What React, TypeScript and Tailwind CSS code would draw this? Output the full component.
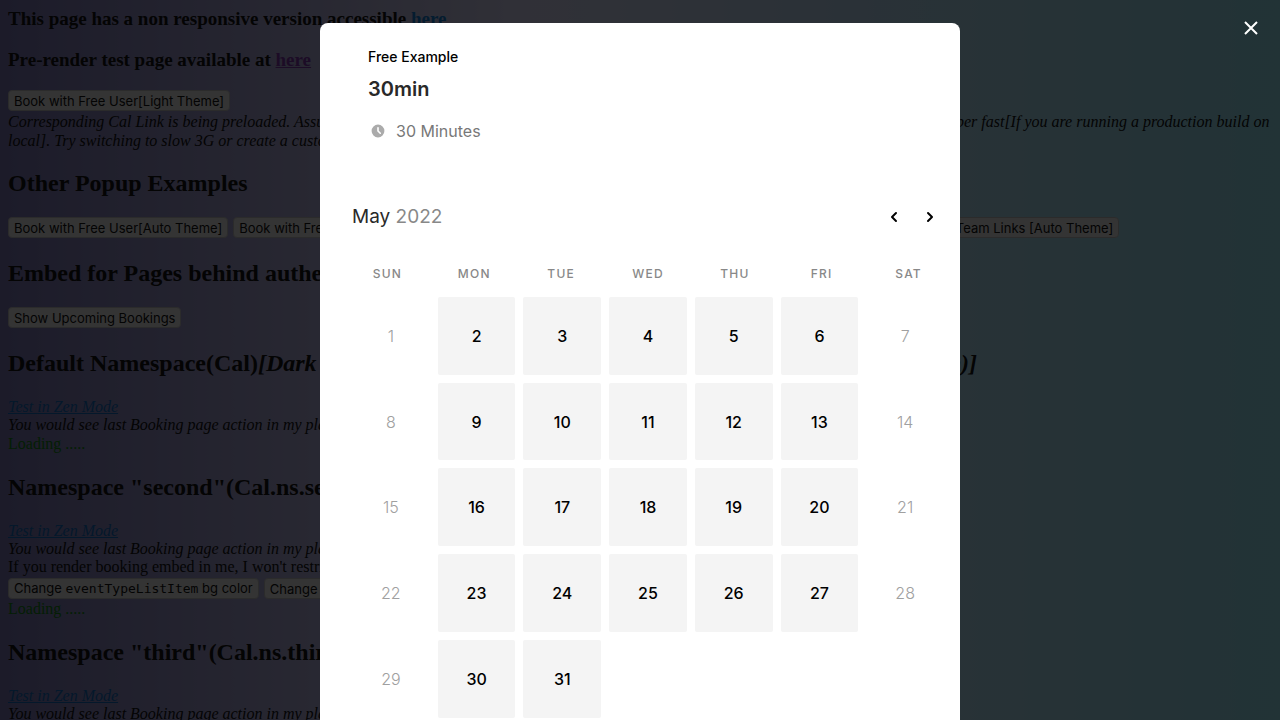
import type { ReactNode } from "react";
import { HiChevronLeft, HiChevronRight, HiClock } from "react-icons/hi";

const WEEKDAYS = ["Sun", "Mon", "Tue", "Wed", "Thu", "Fri", "Sat"];
const DAYS = Array.from({ length: 31 }, (_, i) => i + 1);

function PageButton({ children }: { children: ReactNode }) {
  return (
    <button
      type="button"
      className="h-[21px] shrink-0 rounded border border-[#c4c4c4] bg-[#efefef] px-[5px] font-['Inter',sans-serif] text-[13px] leading-[18px] whitespace-nowrap"
    >
      {children}
    </button>
  );
}

function Heading({ children }: { children: ReactNode }) {
  return <h2 className="mt-[19px] mb-5 text-2xl leading-7 font-bold whitespace-nowrap">{children}</h2>;
}

function ZenLink() {
  return (
    <a href="#zen" className="text-[#0064c0] italic underline">
      Test in Zen Mode
    </a>
  );
}

function Placeholder() {
  return <p className="italic">You would see last Booking page action in my place</p>;
}

function Loading() {
  return <p className="mt-px text-[#008000]">Loading .....</p>;
}

function Playground() {
  return (
    <main className="h-full overflow-hidden bg-[linear-gradient(90deg,rgb(120,116,186)_0%,rgb(221,221,255)_41%,rgb(148,232,249)_100%)] p-2 font-['Liberation_Serif',serif] text-base leading-[18px] text-black">
      <h3 className="mb-[19px] text-[19px] leading-[22px] font-bold">
        This page has a non responsive version accessible{" "}
        <a href="#fixed" className="text-[#0078d8] underline">here</a>
      </h3>
      <h3 className="mb-[19px] text-[19px] leading-[22px] font-bold">
        Pre-render test page available at{" "}
        <a href="#prerender" className="text-[#7a28a8] underline">here</a>
      </h3>
      <div className="flex h-[22px] items-start">
        <PageButton>Book with Free User[Light Theme]</PageButton>
      </div>
      <p className="leading-[19px] italic">
        Corresponding Cal Link is being preloaded. Assuming that it would take you some time to click this as you are
        reading this text, it would open up super fast[If you are running a production build on local]. Try switching to
        slow 3G or create a custom Network configuration which is impossibly slow
      </p>

      <Heading>Other Popup Examples</Heading>
      <div className="flex h-[23px] items-start gap-[5px]">
        <PageButton>Book with Free User[Auto Theme]</PageButton>
        <PageButton>Book with Free User[Dark Theme]</PageButton>
        <PageButton>Book with Test Team [Light Theme]</PageButton>
        <PageButton>Book with Test Team[Dark Theme]</PageButton>
        <PageButton>See Team Links [Auto Theme]</PageButton>
      </div>

      <Heading>Embed for Pages behind authentication</Heading>
      <div className="flex h-[23px] items-start gap-[5px]">
        <PageButton>Show Upcoming Bookings</PageButton>
      </div>

      <Heading>
        Default Namespace(Cal)
        <i>[Dark Theme][inline][guests(joe@example.com and test@example.com)]</i>
      </Heading>
      <section className="py-px">
        <ZenLink />
        <Placeholder />
        <Loading />
      </section>

      <Heading>
        Namespace "second"(Cal.ns.second)<i>[Custom Styling]</i>
      </Heading>
      <section className="py-px">
        <ZenLink />
        <Placeholder />
        <p>If you render booking embed in me, I won't restrict you. The entire page is yours.</p>
        <div className="flex gap-[5px] pt-0.5">
          <PageButton>
            Change <code className="font-['DejaVu_Sans_Mono',monospace] text-[13px]">eventTypeListItem</code> bg color
          </PageButton>
          <PageButton>Change body bg color</PageButton>
        </div>
        <Loading />
      </section>

      <Heading>
        Namespace "third"(Cal.ns.third)<i>[inline]</i>
      </Heading>
      <section className="py-px">
        <ZenLink />
        <Placeholder />
      </section>
    </main>
  );
}

function Day({ day }: { day: number }) {
  const weekend = (day - 1) % 7 === 0 || (day - 1) % 7 === 6;
  return (
    <button
      type="button"
      disabled={weekend}
      className={
        weekend
          ? "aspect-square rounded-xs text-base font-light text-[#a0a0a0]"
          : "aspect-square rounded-xs bg-[#f4f4f4] text-base font-medium text-black"
      }
    >
      {day}
    </button>
  );
}

function BookingDialog() {
  return (
    <div
      role="dialog"
      aria-label="Free Example 30min"
      className="w-full max-w-[640px] self-start rounded-lg bg-white pt-6 pr-4 pb-8 pl-8 font-['Inter',sans-serif]"
    >
      <header className="pl-4">
        <p className="text-sm leading-5 font-medium text-black">Free Example</p>
        <h1 className="mt-2 text-xl leading-7 font-semibold text-[#292929]">30min</h1>
        <p className="mt-4 flex items-center text-base leading-6 text-[#787878]">
          <HiClock className="mr-2.5 ml-0.5 size-4 text-[#ababab]" />
          30 Minutes
        </p>
      </header>

      <div className="mt-[60px] flex items-center justify-between">
        <h2 className="text-[19px] leading-7 text-[#292929]">
          May <span className="text-[#888888]">2022</span>
        </h2>
        <div className="flex gap-4 pr-1 text-black">
          <button type="button" aria-label="Previous month">
            <HiChevronLeft className="size-5" />
          </button>
          <button type="button" aria-label="Next month">
            <HiChevronRight className="size-5" />
          </button>
        </div>
      </div>

      <div className="mt-[33px] grid grid-cols-7 gap-4 text-center text-xs leading-5 font-medium tracking-widest text-[#888888] uppercase">
        {WEEKDAYS.map((name) => (
          <div key={name}>{name}</div>
        ))}
      </div>
      <div className="mt-[13px] grid grid-cols-7 gap-2">
        {DAYS.map((day) => (
          <Day key={day} day={day} />
        ))}
      </div>
    </div>
  );
}

export default function App() {
  return (
    <div className="h-screen overflow-hidden">
      <Playground />
      <div className="fixed inset-0 flex justify-center overflow-hidden bg-[rgba(5,5,5,0.8)] pt-[23px]">
        <BookingDialog />
        <button type="button" aria-label="Close" className="absolute top-[19px] right-5 p-0.5 text-white">
          <svg viewBox="0 0 14 14" className="size-[14px]" fill="none" stroke="currentColor" strokeWidth="2">
            <path d="M1 1 L13 13 M13 1 L1 13" />
          </svg>
        </button>
      </div>
    </div>
  );
}
